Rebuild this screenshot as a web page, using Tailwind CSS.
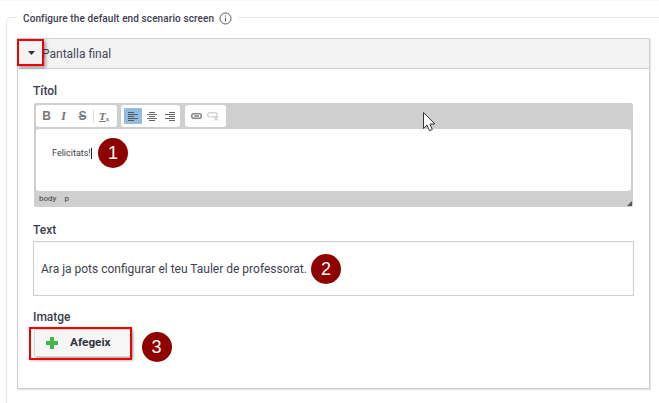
<!DOCTYPE html>
<html lang="ca">
<head>
<meta charset="UTF-8">
<title>Pantalla final</title>
<script src="https://cdn.jsdelivr.net/npm/@tailwindcss/browser@4"></script>
</head>
<body class="bg-white font-['Roboto',sans-serif] text-[#3c3c4c] overflow-hidden">
<div class="relative w-[659px] h-[403px] overflow-hidden">
  <div class="h-px bg-[#f7f7f7]"></div>

  <!-- fieldset outline, runs off the right and bottom -->
  <div class="relative ml-[6px] mt-[16px] w-[700px] h-[420px] border border-[#e3e3e8] rounded-tl-[5px] pl-[10px] pt-[20px]">
    <div class="absolute -top-[9px] left-[10px] bg-white px-[6px] flex items-center gap-[5px] h-[18px]">
      <span class="text-[10px] font-medium tracking-[0.1px] text-[#40404e]">Configure the default end scenario screen</span>
      <svg width="13" height="13" viewBox="0 0 13 13" fill="none" stroke="#55555f"><circle cx="6.5" cy="6.5" r="5.5"/><path d="M6.5 5.6v3.8M6.5 3.4v1.1"/></svg>
    </div>

    <!-- panel -->
    <div class="w-[633px] h-[351px] border border-[#cfcfd8] shadow-[1px_1px_1px_#e4e4ea]">
      <div class="h-[30px] bg-[#f3f3f4] border-b border-[#cfcfd8] flex items-center pl-[24px]">
        <span class="text-[12px] text-[#45455a]">Pantalla final</span>
      </div>

      <div class="pl-[15px] pr-[14px]">
        <div class="text-[12px] font-medium leading-[14px] mt-[15px] mb-[5px]">Títol</div>

        <!-- editor -->
        <div class="ml-[1px] w-[599px] h-[104px] bg-[#cfcfcf] rounded-[2px] flex flex-col relative">
          <div class="h-[26px] flex items-start gap-[4px] pl-[2px] pt-[2px]">
            <div class="h-[22px] w-[81px] bg-white rounded-[3px] flex items-center text-[#777]">
              <span class="ml-[5px] w-[11px] text-center text-[12px] font-bold font-['Liberation_Sans',sans-serif]">B</span>
              <span class="ml-[6px] w-[11px] text-center text-[12px] font-bold italic font-['Liberation_Serif',serif]">I</span>
              <span class="ml-[8px] w-[11px] text-center text-[12px] font-bold line-through font-['Liberation_Sans',sans-serif]">S</span>
              <span class="ml-[5px] w-px h-[13px] bg-[#dedede]"></span>
              <span class="ml-[5px] text-[11px] font-bold italic font-['Liberation_Serif',serif] underline leading-none">T<sub class="text-[7px] not-italic">x</sub></span>
            </div>
            <div class="h-[22px] w-[59px] bg-white rounded-[3px] flex items-center pl-[3px] gap-[2px]">
              <span class="w-[18px] h-[16px] bg-[#92bde0] rounded-[1px] flex items-center justify-center">
                <svg width="10" height="9" viewBox="0 0 10 9" stroke="#555" fill="none"><path d="M0 .5h6M0 2.5h10M0 4.5h6M0 6.5h10M0 8.5h6"/></svg>
              </span>
              <span class="w-[16px] h-[16px] flex items-center justify-center">
                <svg width="10" height="9" viewBox="0 0 10 9" stroke="#666" fill="none"><path d="M2 .5h6M0 2.5h10M2 4.5h6M0 6.5h10M2 8.5h6"/></svg>
              </span>
              <span class="w-[16px] h-[16px] flex items-center justify-center">
                <svg width="10" height="9" viewBox="0 0 10 9" stroke="#666" fill="none"><path d="M4 .5h6M0 2.5h10M4 4.5h6M0 6.5h10M4 8.5h6"/></svg>
              </span>
            </div>
            <div class="ml-px h-[22px] w-[41px] bg-white rounded-[3px] flex items-center pl-[6px] gap-[5px]">
              <svg width="11" height="6" viewBox="0 0 11 6" fill="none" stroke="#8a8a8a" stroke-width="1.6"><rect x=".8" y=".8" width="9.4" height="4.4" rx="2"/><path d="M3 3h5"/></svg>
              <svg width="12" height="9" viewBox="0 0 12 9" fill="none" stroke="#d0d0d0" stroke-width="1.3"><rect x=".7" y=".7" width="9.5" height="4.2" rx="1.6"/><path d="M7 4.5l4 4M11 4.5l-4 4"/></svg>
            </div>
          </div>
          <div class="mx-[2px] h-[62px] bg-white rounded-[3px] pl-[16px] pt-[18px] text-[9px] leading-[12px] text-[#3f3f3f] flex items-start">
            <span>Felicitats!</span><span class="inline-block w-px h-[11px] bg-[#222] mt-[1px]"></span>
          </div>
          <div class="h-[16px] flex items-center gap-[8px] pl-[5px] text-[8px] font-medium text-[#555]">
            <span>body</span><span>p</span>
          </div>
          <svg class="absolute right-[1px] bottom-[1px]" width="5" height="5" viewBox="0 0 5 5"><path d="M5 0v5H0z" fill="#555"/></svg>
        </div>

        <div class="text-[12px] font-medium leading-[14px] mt-[16px] mb-[4px]">Text</div>
        <div class="w-[601px] h-[55px] border border-[#cfcfcf] shadow-[inset_0_0_2px_#eee] flex items-center pl-[7px] text-[12px] text-[#42424f]">
          Ara ja pots configurar el teu Tauler de professorat.
        </div>

        <div class="text-[12px] font-medium leading-[14px] mt-[14px] mb-[5px]">Imatge</div>
        <button class="w-[97px] h-[28px] ml-[1px] bg-[#f6f6f6] border border-[#d2d2d2] rounded-[2px] shadow-[2px_2px_3px_rgba(0,0,0,.3)] flex items-center pl-[10px] gap-[11px] text-[11.8px] font-bold text-[#33333d]">
          <svg width="14" height="14" viewBox="0 0 14 14"><path d="M5 1h4v4h4v4H9v4H5V9H1V5h4z" fill="#3dbb45"/></svg>
          Afegeix
        </button>
      </div>
    </div>
  </div>

  <!-- red highlight boxes -->
  <div class="absolute left-[17px] top-[39px] w-[27px] h-[27px] border-[2px] border-[#f00000] shadow-[2px_2px_3px_rgba(0,0,0,.35)] flex items-center justify-center pl-px">
    <svg width="7" height="4" viewBox="0 0 7 4"><path d="M0 0h7L3.5 4z" fill="#333"/></svg>
  </div>
  <div class="absolute left-[29px] top-[327px] w-[103px] h-[33px] border-[2px] border-[#f00000] shadow-[1px_1px_2px_rgba(0,0,0,.2)]"></div>

  <!-- numbered markers -->
  <div class="absolute left-[98px] top-[138px] size-[30px] rounded-full bg-[#8f0000] text-white text-[18px] flex items-center justify-center font-['Liberation_Sans',sans-serif]">1</div>
  <div class="absolute left-[311px] top-[254px] size-[30px] rounded-full bg-[#8f0000] text-white text-[18px] flex items-center justify-center font-['Liberation_Sans',sans-serif]">2</div>
  <div class="absolute left-[141.5px] top-[332px] size-[30px] rounded-full bg-[#8f0000] text-white text-[18px] flex items-center justify-center font-['Liberation_Sans',sans-serif]">3</div>

  <!-- mouse pointer -->
  <svg class="absolute left-[423px] top-[112px]" width="13" height="20" viewBox="0 0 13 20"><path d="M.5.5v16l3.6-3.4 2.4 5.6 2.8-1.2-2.4-5.5h5z" fill="#fff" stroke="#333"/></svg>
</div>
</body>
</html>
